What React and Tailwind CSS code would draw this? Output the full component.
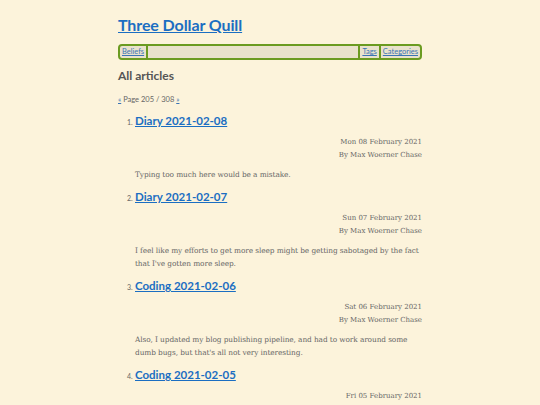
const posts = [
  {
    title: "Diary 2021-02-08",
    date: "Mon 08 February 2021",
    summary: "Typing too much here would be a mistake.",
  },
  {
    title: "Diary 2021-02-07",
    date: "Sun 07 February 2021",
    summary:
      "I feel like my efforts to get more sleep might be getting sabotaged by the fact that I've gotten more sleep.",
  },
  {
    title: "Coding 2021-02-06",
    date: "Sat 06 February 2021",
    summary:
      "Also, I updated my blog publishing pipeline, and had to work around some dumb bugs, but that's all not very interesting.",
  },
  {
    title: "Coding 2021-02-05",
    date: "Fri 05 February 2021",
    summary: "",
  },
];

const heading = { fontFamily: "Lato, 'Open Sans', sans-serif" };
const body = { fontFamily: "'DejaVu Serif', 'Liberation Serif', serif" };

export default function App() {
  return (
    <div className="min-h-screen w-full bg-[#fcf3db] text-[#555]">
      <div className="mx-auto w-[304px] pt-[14px]" style={heading}>
        <h1 className="text-[16px] font-bold leading-[22px] tracking-[-0.1px]">
          <a href="#" className="text-[#1b6ec2] underline">
            Three Dollar Quill
          </a>
        </h1>

        {/* NAV */}
        <nav className="mt-[8px] flex h-[16px] items-stretch rounded-[4px] border-2 border-[#6b9b21] bg-[#e9e2cc] text-[7.5px] leading-[12px]">
          <a href="#" className="px-[2px] text-[#3a74b5] underline">
            Beliefs
          </a>
          <span className="w-[2px] bg-[#6b9b21]"></span>
          <span className="flex-1"></span>
          <span className="w-[2px] bg-[#6b9b21]"></span>
          <a href="#" className="px-[2px] text-[#3a74b5] underline">
            Tags
          </a>
          <span className="w-[2px] bg-[#6b9b21]"></span>
          <a href="#" className="px-[2px] text-[#3a74b5] underline">
            Categories
          </a>
        </nav>

        <h2 className="mt-[8px] text-[12px] font-bold leading-[16px] text-[#555]">
          All articles
        </h2>

        <p className="mt-[11px] text-[7.5px] leading-[10px] text-[#666]">
          <a href="#" className="text-[#3a74b5] underline">«</a> Page 205 / 308{" "}
          <a href="#" className="text-[#3a74b5] underline">»</a>
        </p>

        {/* ARTICLES */}
        <ol className="mt-[8px] pl-[17px]">
          {posts.map((p, i) => (
            <li key={p.title} className="flex flex-col">
              <div className="flex items-baseline">
                <span className="-ml-[8px] w-[8px] text-[7px] text-[#666]">{i + 1}.</span>
                <a
                  href="#"
                  className="text-[11.5px] font-bold leading-[16px] text-[#1b6ec2] underline"
                >
                  {p.title}
                </a>
              </div>
              <div
                className="mt-[7px] text-right text-[7px] leading-[13px] text-[#666]"
                style={body}
              >
                <div>{p.date}</div>
                <div>By Max Woerner Chase</div>
              </div>
              {p.summary && (
                <p
                  className="mt-[6px] mb-[8px] text-[7.4px] leading-[13px] tracking-[-0.1px] text-[#666]"
                  style={body}
                >
                  {p.summary}
                </p>
              )}
            </li>
          ))}
        </ol>
      </div>
    </div>
  );
}
